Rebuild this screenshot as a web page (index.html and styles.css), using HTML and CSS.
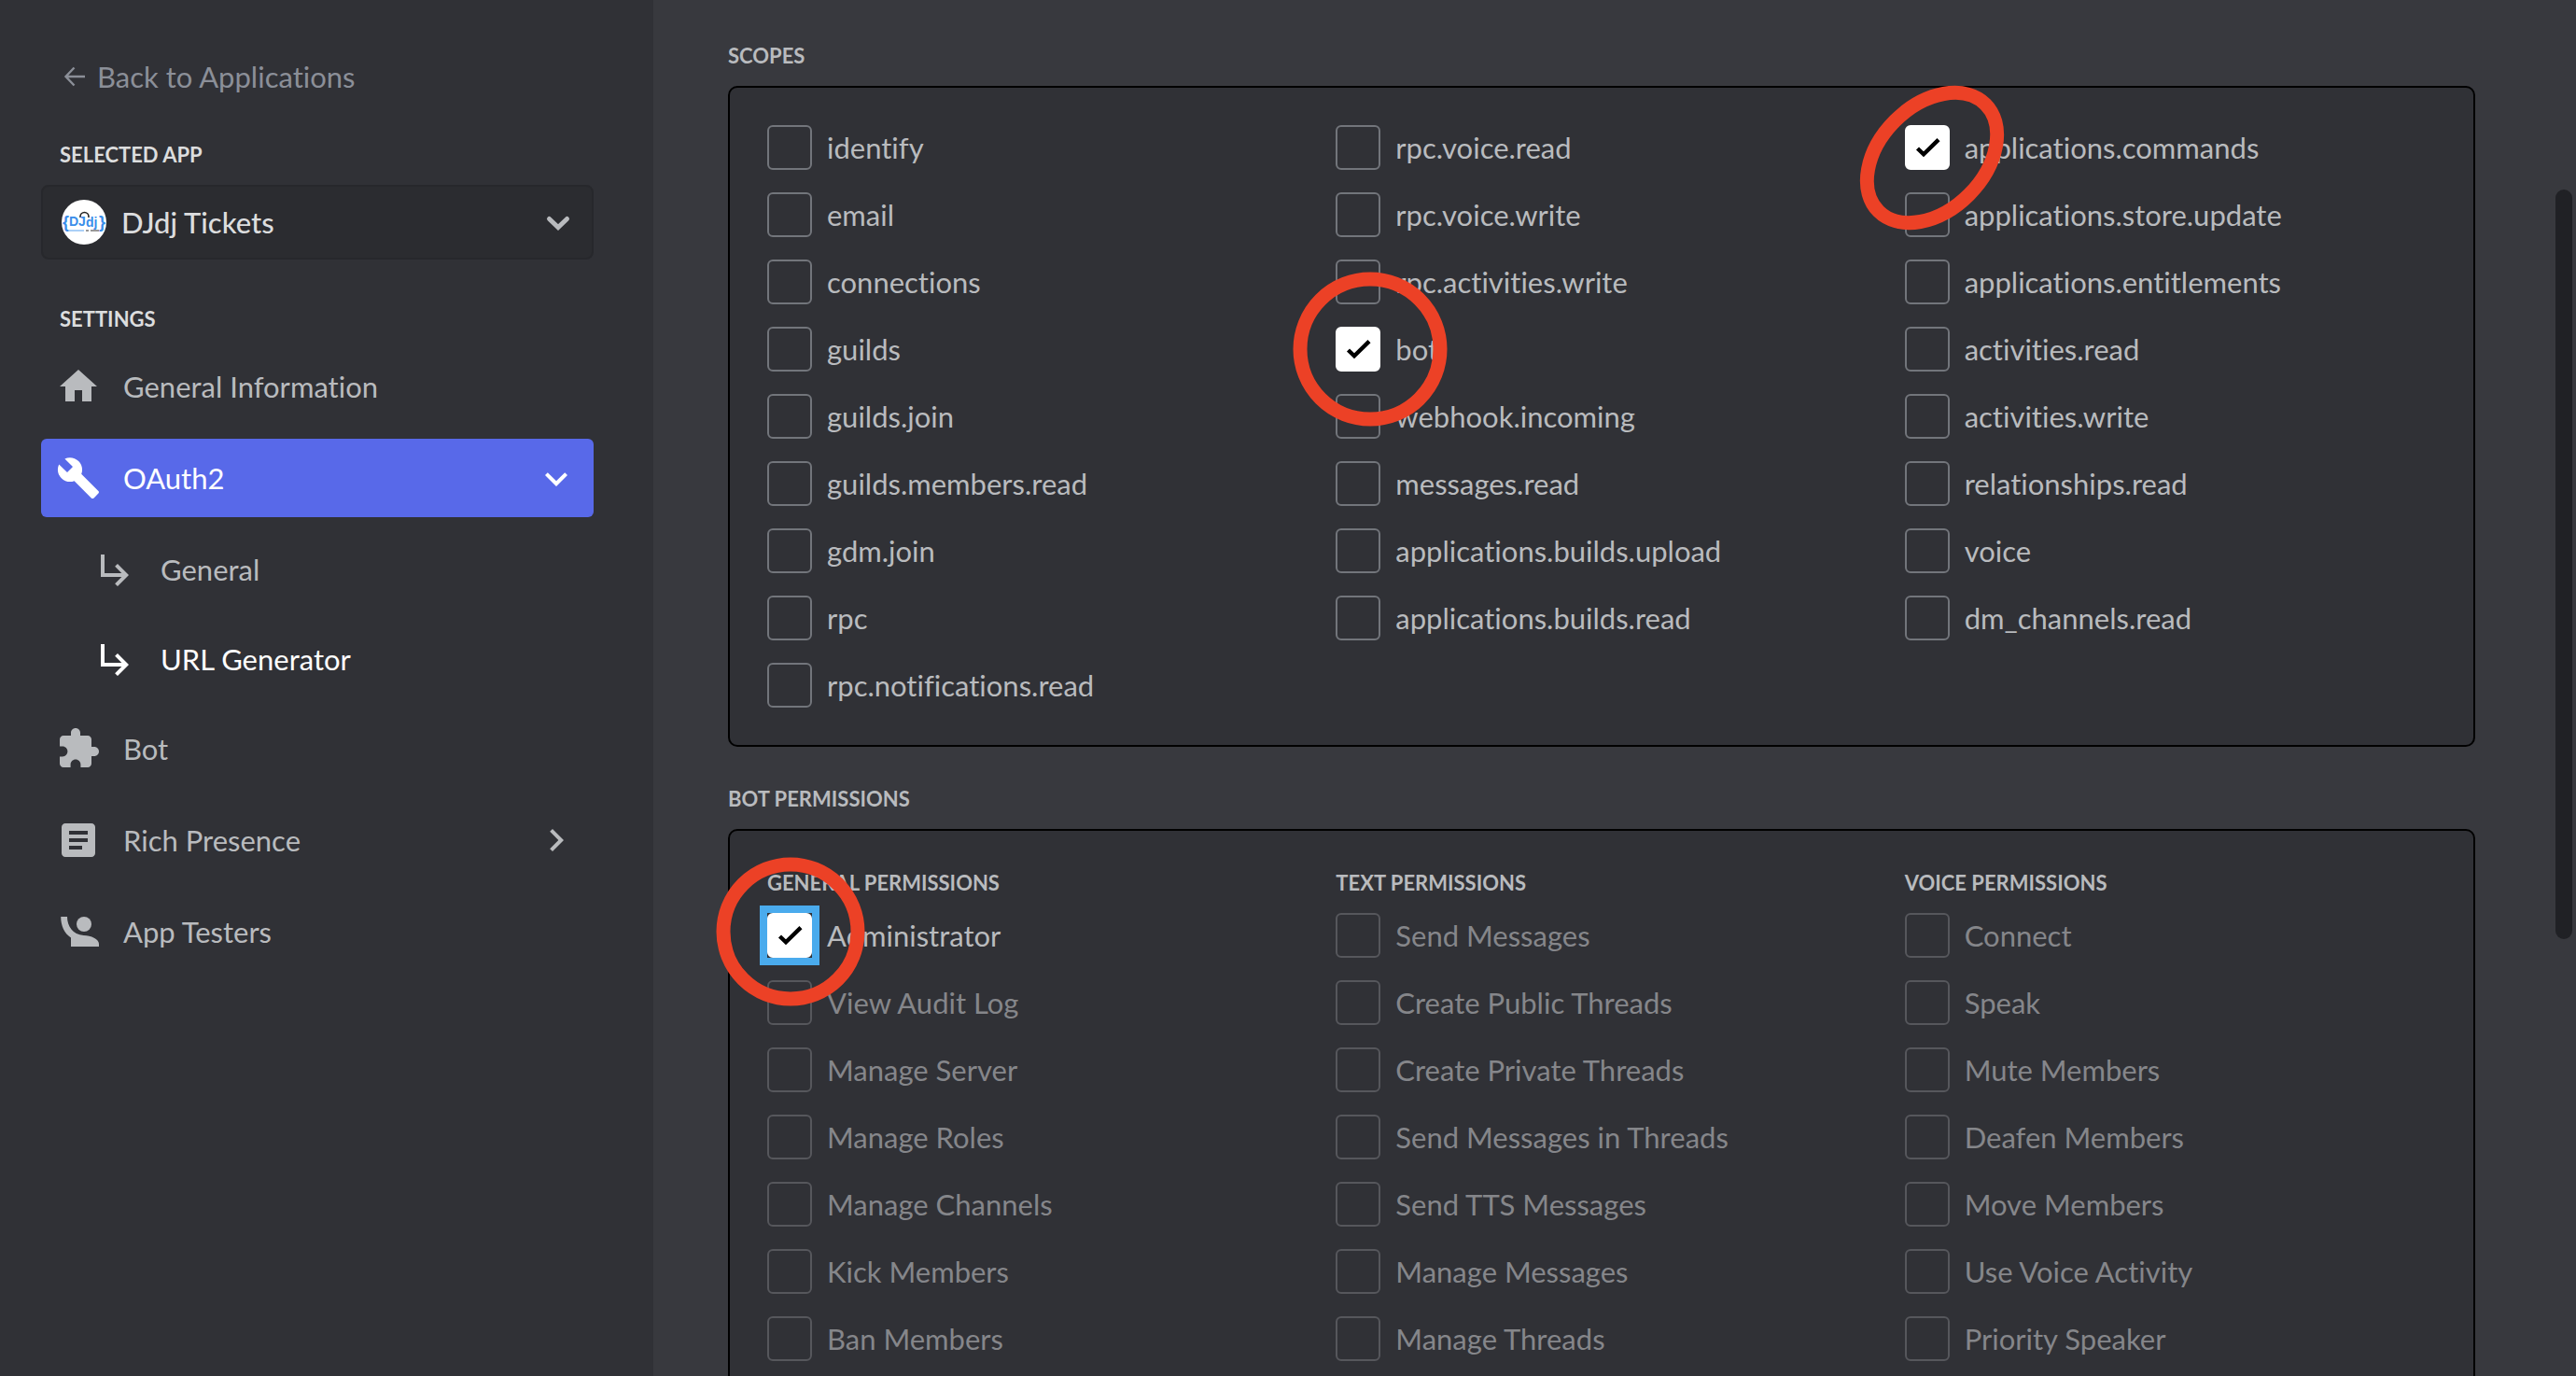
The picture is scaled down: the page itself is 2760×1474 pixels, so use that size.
FILE: index.html
```html
<!DOCTYPE html>
<html lang="en">
<head>
<meta charset="utf-8">
<title>OAuth2 URL Generator</title>
<link rel="stylesheet" href="styles.css">
</head>
<body>
<svg class="sprite" aria-hidden="true">
  <symbol id="sub" viewBox="0 0 24 24"><path d="M19 15l-6 6-1.42-1.42L15.17 16H4V4h2v10h9.17l-3.59-3.58L13 9l6 6z"/></symbol>
  <symbol id="tick" viewBox="0 0 48 48"><path d="M13.500 25L20 31.300L36 15.700" fill="none" stroke="#000" stroke-width="4.400"/></symbol>
</svg>
<div class="app">
  <aside class="sidebar">
    <a class="back" href="#"><svg class="back-arrow" viewBox="0 0 24 24" aria-hidden="true"><path d="M11.500 2.500L2.500 12l9 9.500M2.500 12H23" fill="none" stroke="currentColor" stroke-width="2.400"/></svg>Back to Applications</a>
    <label class="side-title" for="app">Selected App</label>
    <div class="picker">
      <select id="app" class="picker-select"><option>DJdj Tickets</option></select>
      <svg class="avatar" viewBox="0 0 48 48" aria-hidden="true">
        <circle cx="24" cy="24" r="24" fill="#fff"/>
        <path d="M20 19v-1a4.500 4.500 0 0 1 9 0v1" fill="none" stroke="#222" stroke-width="1.600"/>
        <g fill="#3b8eea" font-family="Liberation Sans, sans-serif" font-weight="700">
          <text x="1" y="30" font-size="18">{</text>
          <text x="8" y="28" font-size="14">DJ</text>
          <text x="26" y="29" font-size="14">dj</text>
          <text x="40" y="30" font-size="18">}</text>
        </g>
        <path d="M7 33h17" stroke="#8fc0f5" stroke-width="1.500"/>
        <path d="M26 33h3m2 0h9" stroke="#777" stroke-width="1.500"/>
      </svg>
      <svg class="picker-chevron" viewBox="0 0 48 48" aria-hidden="true"><path d="M14.500 20.500L24 29.500l9.500-9" fill="none" stroke="currentColor" stroke-width="5" stroke-linecap="round"/></svg>
    </div>
    <h2 class="side-title side-title-settings">Settings</h2>
    <nav class="nav">
      <a class="nav-item" href="#"><svg class="icon" viewBox="0 0 24 24"><path d="M10 20v-6h4v6h5v-8h3L12 3 2 12h3v8z"/></svg><span class="nav-text">General Information</span></a>
      <a class="nav-item active" href="#"><svg class="icon" viewBox="0 0 24 24"><path d="M22.700 19l-9.100-9.100c.9-2.300.4-5-1.500-6.900-2-2-5-2.400-7.400-1.300L9 6 6 9 1.600 4.700C.4 7.100.9 10.100 2.900 12.100c1.900 1.900 4.600 2.400 6.900 1.500l9.100 9.100c.4.4 1 .4 1.400 0l2.300-2.300c.5-.4.5-1.100.1-1.400z"/></svg><span class="nav-text">OAuth2</span><svg class="icon" viewBox="0 0 24 24"><path d="M16.590 9.090L12 13.670 7.410 9.090 6 10.500l6 6 6-6z"/></svg></a>
      <a class="nav-item nav-sub" href="#"><svg class="icon"><use href="#sub"/></svg><span class="nav-text">General</span></a>
      <a class="nav-item nav-sub current" href="#"><svg class="icon"><use href="#sub"/></svg><span class="nav-text">URL Generator</span></a>
      <a class="nav-item" href="#"><svg class="icon" viewBox="0 0 24 24"><path d="M20.500 11H19V7c0-1.100-.9-2-2-2h-4V3.500C13 2.120 11.880 1 10.500 1S8 2.120 8 3.500V5H4c-1.100 0-1.990.9-1.990 2v3.800H3.500c1.490 0 2.700 1.210 2.700 2.700s-1.210 2.700-2.700 2.700H2V20c0 1.100.9 2 2 2h3.800v-1.500c0-1.490 1.210-2.700 2.700-2.700 1.490 0 2.700 1.210 2.700 2.700V22H17c1.100 0 2-.9 2-2v-4h1.500c1.380 0 2.500-1.120 2.500-2.500S21.880 11 20.500 11z"/></svg><span class="nav-text">Bot</span></a>
      <a class="nav-item" href="#"><svg class="icon" viewBox="0 0 24 24"><path d="M19 3H5c-1.100 0-2 .9-2 2v14c0 1.100.9 2 2 2h14c1.100 0 2-.9 2-2V5c0-1.100-.9-2-2-2zm-5 14H7v-2h7v2zm3-4H7v-2h10v2zm0-4H7V7h10v2z"/></svg><span class="nav-text">Rich Presence</span><svg class="icon" viewBox="0 0 24 24"><path d="M10 6L8.590 7.410 13.170 12l-4.580 4.590L10 18l6-6z"/></svg></a>
      <a class="nav-item" href="#"><svg class="icon" viewBox="0 0 24 24"><circle cx="15" cy="8" r="4"/><path d="M2.600 4H6c0 5 3 9.600 8.800 10 4 .1 8.200 2 8.200 4.500V20H8v-4.800C4.500 13 2.600 9 2.600 4z"/></svg><span class="nav-text">App Testers</span></a>
    </nav>
  </aside>
  <main class="main">
    <h2 class="title">Scopes</h2>
    <section class="panel">
      <div class="column">
        <label class="option"><span class="check"><input type="checkbox"></span>identify</label>
        <label class="option"><span class="check"><input type="checkbox"></span>email</label>
        <label class="option"><span class="check"><input type="checkbox"></span>connections</label>
        <label class="option"><span class="check"><input type="checkbox"></span>guilds</label>
        <label class="option"><span class="check"><input type="checkbox"></span>guilds.join</label>
        <label class="option"><span class="check"><input type="checkbox"></span>guilds.members.read</label>
        <label class="option"><span class="check"><input type="checkbox"></span>gdm.join</label>
        <label class="option"><span class="check"><input type="checkbox"></span>rpc</label>
        <label class="option"><span class="check"><input type="checkbox"></span>rpc.notifications.read</label>
      </div>
      <div class="column">
        <label class="option"><span class="check"><input type="checkbox"></span>rpc.voice.read</label>
        <label class="option"><span class="check"><input type="checkbox"></span>rpc.voice.write</label>
        <label class="option"><span class="check"><input type="checkbox"></span>rpc.activities.write</label>
        <label class="option"><span class="check"><input type="checkbox" checked><svg class="tick"><use href="#tick"/></svg><svg class="ring ring-bot" viewBox="-84 -84 168 168"><circle r="75"/></svg></span>bot</label>
        <label class="option"><span class="check"><input type="checkbox"></span>webhook.incoming</label>
        <label class="option"><span class="check"><input type="checkbox"></span>messages.read</label>
        <label class="option"><span class="check"><input type="checkbox"></span>applications.builds.upload</label>
        <label class="option"><span class="check"><input type="checkbox"></span>applications.builds.read</label>
      </div>
      <div class="column">
        <label class="option"><span class="check"><input type="checkbox" checked><svg class="tick"><use href="#tick"/></svg><svg class="ring ring-commands" viewBox="-84 -84 168 168"><ellipse rx="81" ry="56" transform="rotate(-45)"/></svg></span>applications.commands</label>
        <label class="option"><span class="check"><input type="checkbox"></span>applications.store.update</label>
        <label class="option"><span class="check"><input type="checkbox"></span>applications.entitlements</label>
        <label class="option"><span class="check"><input type="checkbox"></span>activities.read</label>
        <label class="option"><span class="check"><input type="checkbox"></span>activities.write</label>
        <label class="option"><span class="check"><input type="checkbox"></span>relationships.read</label>
        <label class="option"><span class="check"><input type="checkbox"></span>voice</label>
        <label class="option"><span class="check"><input type="checkbox"></span>dm_channels.read</label>
      </div>
    </section>
    <h2 class="title">Bot Permissions</h2>
    <section class="panel">
      <div class="column">
        <h3 class="title column-title">General Permissions</h3>
        <label class="option"><span class="check focused"><input type="checkbox" checked><svg class="tick"><use href="#tick"/></svg><svg class="ring ring-admin" viewBox="-84 -84 168 168"><circle r="72"/></svg></span>Administrator</label>
        <label class="option disabled"><span class="check"><input type="checkbox" disabled></span>View Audit Log</label>
        <label class="option disabled"><span class="check"><input type="checkbox" disabled></span>Manage Server</label>
        <label class="option disabled"><span class="check"><input type="checkbox" disabled></span>Manage Roles</label>
        <label class="option disabled"><span class="check"><input type="checkbox" disabled></span>Manage Channels</label>
        <label class="option disabled"><span class="check"><input type="checkbox" disabled></span>Kick Members</label>
        <label class="option disabled"><span class="check"><input type="checkbox" disabled></span>Ban Members</label>
      </div>
      <div class="column">
        <h3 class="title column-title">Text Permissions</h3>
        <label class="option disabled"><span class="check"><input type="checkbox" disabled></span>Send Messages</label>
        <label class="option disabled"><span class="check"><input type="checkbox" disabled></span>Create Public Threads</label>
        <label class="option disabled"><span class="check"><input type="checkbox" disabled></span>Create Private Threads</label>
        <label class="option disabled"><span class="check"><input type="checkbox" disabled></span>Send Messages in Threads</label>
        <label class="option disabled"><span class="check"><input type="checkbox" disabled></span>Send TTS Messages</label>
        <label class="option disabled"><span class="check"><input type="checkbox" disabled></span>Manage Messages</label>
        <label class="option disabled"><span class="check"><input type="checkbox" disabled></span>Manage Threads</label>
      </div>
      <div class="column">
        <h3 class="title column-title">Voice Permissions</h3>
        <label class="option disabled"><span class="check"><input type="checkbox" disabled></span>Connect</label>
        <label class="option disabled"><span class="check"><input type="checkbox" disabled></span>Speak</label>
        <label class="option disabled"><span class="check"><input type="checkbox" disabled></span>Mute Members</label>
        <label class="option disabled"><span class="check"><input type="checkbox" disabled></span>Deafen Members</label>
        <label class="option disabled"><span class="check"><input type="checkbox" disabled></span>Move Members</label>
        <label class="option disabled"><span class="check"><input type="checkbox" disabled></span>Use Voice Activity</label>
        <label class="option disabled"><span class="check"><input type="checkbox" disabled></span>Priority Speaker</label>
      </div>
    </section>
    <div class="scroll-thumb"></div>
  </main>
</div>
</body>
</html>
```
FILE: styles.css
```css
* {
  box-sizing: border-box;
}

body {
  margin: 0;
  background: #38393e;
  color: #b9bbbe;
  font-family: Lato, "Open Sans", sans-serif;
  font-size: 31px;
  line-height: 40px;
  font-variant-ligatures: none;
}

h2,
h3 {
  margin: 0;
}

a {
  color: inherit;
  text-decoration: none;
}

.sprite {
  display: none;
}

.app {
  display: flex;
  height: 100vh;
  overflow: hidden;
}

/* Sidebar */

.sidebar {
  display: flex;
  flex-direction: column;
  flex: 0 0 700px;
  padding: 62px 64px 0 44px;
  background: #303136;
}

.back {
  display: flex;
  align-items: center;
  gap: 12px;
  padding-left: 24px;
  color: #8b8f98;
}

.back-arrow {
  width: 24px;
  height: 24px;
}

.side-title {
  margin: 48px 20px 16px;
  color: #dcddde;
  font-size: 22px;
  font-weight: 700;
  line-height: 32px;
  text-transform: uppercase;
}

.side-title-settings {
  margin-bottom: 14px;
}

.picker {
  display: grid;
  grid-template-columns: 1fr;
  align-items: center;
}

.picker > * {
  grid-area: 1 / 1;
}

.picker-select {
  height: 80px;
  padding: 0 80px 0 84px;
  border: 2px solid #27282c;
  border-radius: 8px;
  background: #2b2c30;
  color: #dcddde;
  font: 500 31px/40px Lato, "Open Sans", sans-serif;
  appearance: none;
}

.avatar {
  width: 48px;
  height: 48px;
  margin-left: 22px;
  pointer-events: none;
}

.picker-chevron {
  width: 48px;
  height: 48px;
  margin-right: 14px;
  justify-self: end;
  color: #b9bbbe;
  pointer-events: none;
}

.nav {
  display: flex;
  flex-direction: column;
  gap: 14px;
}

.nav-item {
  display: flex;
  align-items: center;
  gap: 24px;
  height: 84px;
  padding: 0 16px;
  border-radius: 6px;
}

.nav-text {
  flex: 1;
}

.nav-sub {
  height: 82px;
  padding-top: 2px;
  padding-left: 56px;
}

.active {
  background: #5869e9;
  color: #fff;
}

.current {
  color: #fff;
}

.icon {
  flex: none;
  width: 48px;
  height: 48px;
  fill: currentColor;
}

/* Main area */

.main {
  position: relative;
  flex: 1;
  padding: 44px 108px 0 80px;
  overflow: hidden;
}

.title {
  margin-bottom: 16px;
  font-size: 22px;
  font-weight: 700;
  line-height: 32px;
  text-transform: uppercase;
}

.panel {
  display: grid;
  grid-template-columns: repeat(3, 1fr);
  margin-bottom: 40px;
  padding: 40px 0 40px 40px;
  border: 2px solid #000;
  border-radius: 10px;
  background: #303136;
}

.column {
  display: flex;
  flex-direction: column;
  gap: 24px;
}

.column-title {
  margin-bottom: -8px;
}

.option {
  display: flex;
  align-items: center;
  gap: 16px;
}

.disabled {
  color: #85868a;
}

.check {
  position: relative;
  display: grid;
  width: 48px;
  height: 48px;
}

.check > input,
.tick {
  grid-area: 1 / 1;
  width: 48px;
  height: 48px;
}

.check > input {
  margin: 0;
  border: 2px solid #72757b;
  border-radius: 6px;
  appearance: none;
}

.check > input:checked {
  border-color: #fff;
  background: #fff;
}

.check > input:disabled {
  border-color: #56575c;
}

.focused {
  outline: 8px solid #4aabed;
}

.tick {
  z-index: 1;
  pointer-events: none;
}

/* Hand-placed highlights over the ticked boxes */

.ring {
  position: absolute;
  z-index: 2;
  width: 168px;
  height: 168px;
  fill: none;
  stroke: #ec4126;
  stroke-width: 15px;
  overflow: visible;
  pointer-events: none;
}

.ring-bot {
  top: -60px;
  left: -47px;
}

.ring-commands {
  top: -49px;
  left: -55px;
}

.ring-admin {
  top: -64px;
  left: -59px;
}

.scroll-thumb {
  position: absolute;
  top: 203px;
  right: 4px;
  width: 18px;
  height: 803px;
  border-radius: 9px;
  background: #202125;
}
```
